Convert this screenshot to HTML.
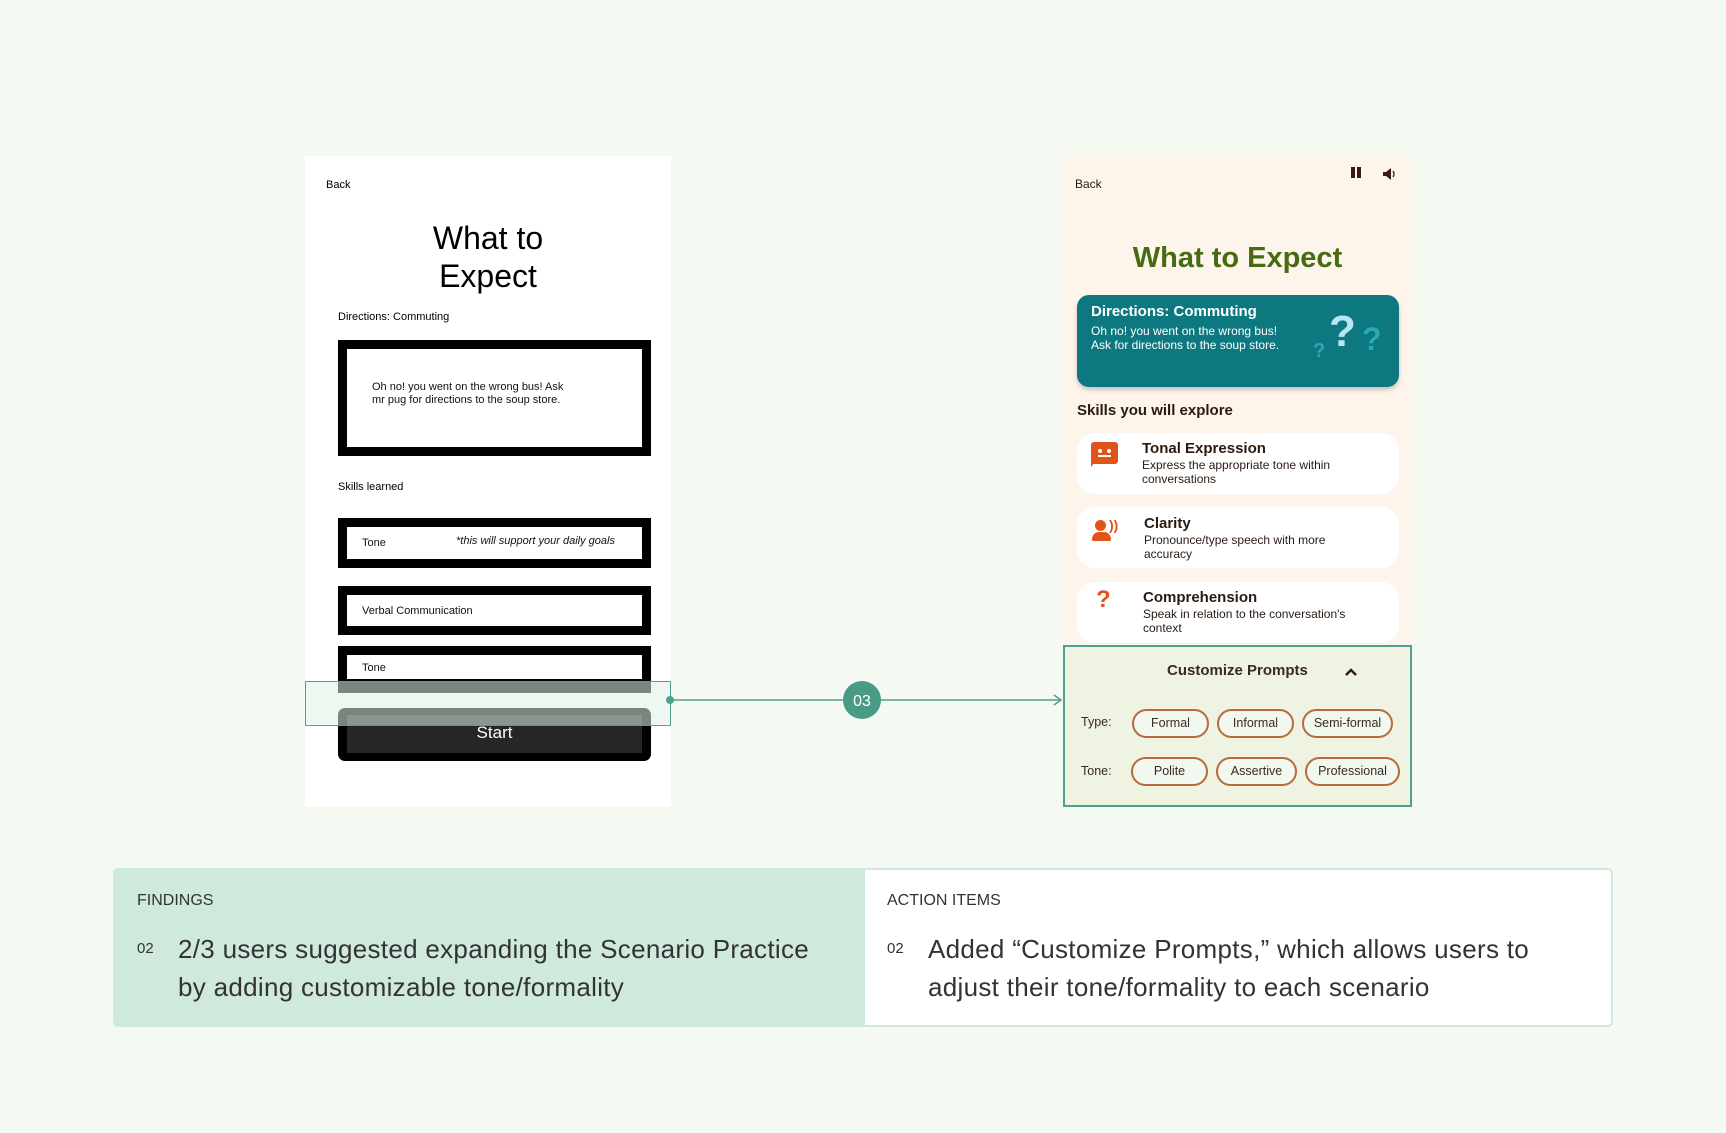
<!DOCTYPE html>
<html><head><meta charset="utf-8"><style>
*{margin:0;padding:0;box-sizing:border-box}
body{width:1726px;height:1133px;background:#f4faf1;position:relative;overflow:hidden;font-family:"Liberation Sans",sans-serif}
.a{position:absolute}
.lc{left:305px;top:156px;width:366px;height:651px;background:#fff}
.bx{position:absolute;left:338px;width:313px;border:9px solid #000;background:#fff;font-size:11px;color:#111}
.rc{left:1063px;top:156px;width:349px;height:651px;background:#fdf4ec}
.sk{position:absolute;left:1077px;width:322px;height:61px;background:#fff;border-radius:18px}
.sk b{position:absolute;font-size:15px;color:#2a1a12}
.sk span{position:absolute;font-size:12px;color:#2a1a12;line-height:14px}
.pill{position:absolute;height:29px;border:2px solid #b86a3c;border-radius:15px;background:#f1f8ef;font-size:12.5px;color:#3a2a22;text-align:center;line-height:25px}
</style></head><body>

<div class="a lc"></div>
<div class="a" style="left:326px;top:179px;font-size:11px">Back</div>
<div class="a" style="left:388px;top:219px;width:200px;text-align:center;font-size:32px;line-height:38px;color:#000">What to<br>Expect</div>
<div class="a" style="left:338px;top:311px;font-size:11px">Directions: Commuting</div>
<div class="bx" style="top:340px;height:116px"><div class="a" style="left:25px;top:32px;line-height:13px">Oh no! you went on the wrong bus! Ask<br>mr pug for directions to the soup store.</div></div>
<div class="a" style="left:338px;top:481px;font-size:11px">Skills learned</div>
<div class="bx" style="top:518px;height:50px"><div class="a" style="left:15px;top:10px">Tone</div><div class="a" style="left:109px;top:8px;font-style:italic">*this will support your daily goals</div></div>
<div class="bx" style="top:586px;height:49px"><div class="a" style="left:15px;top:10px">Verbal Communication</div></div>
<div class="bx" style="top:646px;height:47px;border-bottom-width:14px"><div class="a" style="left:15px;top:7px">Tone</div></div>
<div class="a" style="left:338px;top:708px;width:313px;height:53px;background:#000;border-radius:7px"><div class="a" style="left:9px;top:7px;width:295px;height:38px;background:#262626;color:#fff;font-size:17px;text-align:center;line-height:36px">Start</div></div>
<div class="a" style="left:305px;top:681px;width:366px;height:45px;border:1.5px solid #4fa08f;background:rgba(225,243,228,.55)"></div>

<svg class="a" style="left:0;top:0" width="1726" height="1133">
<line x1="670" y1="700" x2="1060" y2="700" stroke="#4fa08f" stroke-width="1.5"/>
<circle cx="670" cy="700" r="4" fill="#4fa08f"/>
<path d="M1054 695 L1061 700 L1054 705" fill="none" stroke="#4fa08f" stroke-width="1.5"/>
<circle cx="862" cy="700" r="19" fill="#4a9a88"/>
<text x="862" y="706" text-anchor="middle" font-family="Liberation Sans" font-size="16" fill="#fff">03</text>
</svg>

<div class="a rc"></div>
<div class="a" style="left:1075px;top:177px;font-size:12px;color:#2a1a12">Back</div>
<div class="a" style="left:1351px;top:167px;width:4px;height:11px;background:#3a1a12"></div>
<div class="a" style="left:1357px;top:167px;width:4px;height:11px;background:#3a1a12"></div>
<svg class="a" style="left:1382px;top:167px" width="14" height="14"><path d="M1 5h3l5-4v12l-5-4H1z" fill="#3a1a12"/><path d="M11 4q2 3 0 6" stroke="#3a1a12" fill="none" stroke-width="1.3"/></svg>
<div class="a" style="left:1063px;top:242px;width:349px;text-align:center;font-size:29px;font-weight:bold;color:#476b10">What to Expect</div>
<div class="a" style="left:1077px;top:295px;width:322px;height:92px;background:#0e7880;border-radius:12px;box-shadow:0 3px 4px rgba(0,0,0,.2);color:#fff">
<div class="a" style="left:14px;top:8px;font-size:15px;font-weight:bold">Directions: Commuting</div>
<div class="a" style="left:14px;top:29px;font-size:12px;line-height:14px">Oh no! you went on the wrong bus!<br>Ask for directions to the soup store.</div>
<div class="a" style="left:252px;top:12px;font-size:44px;font-weight:bold;color:#b8e6f2">?</div>
<div class="a" style="left:285px;top:26px;font-size:32px;font-weight:bold;color:#2aa9b4">?</div>
<div class="a" style="left:236px;top:45px;font-size:20px;font-weight:bold;color:#2aa9b4">?</div>
</div>
<div class="a" style="left:1077px;top:402px;font-size:15px;font-weight:bold;color:#2a1a12">Skills you will explore</div>
<div class="sk" style="top:433px"><div class="a" style="left:14px;top:9px;width:27px;height:22px;background:#e0541a;border-radius:3px"></div><div class="a" style="left:14px;top:28px;width:0;height:0;border-left:5px solid #e0541a;border-bottom:6px solid transparent"></div><div class="a" style="left:21px;top:16px;width:4px;height:4px;background:#fff;border-radius:2px"></div><div class="a" style="left:30px;top:16px;width:4px;height:4px;background:#fff;border-radius:2px"></div><div class="a" style="left:21px;top:22px;width:13px;height:2px;background:#fff"></div><b style="left:65px;top:7px">Tonal Expression</b><span style="left:65px;top:25px">Express the appropriate tone within<br>conversations</span></div>
<div class="sk" style="top:507px"><div class="a" style="left:18px;top:13px;width:11px;height:11px;background:#e0541a;border-radius:6px"></div><div class="a" style="left:15px;top:25px;width:19px;height:9px;background:#e0541a;border-radius:8px 8px 2px 2px"></div><div class="a" style="left:32px;top:10px;font-size:14px;color:#e0541a;font-weight:bold">))</div><b style="left:67px;top:8px">Clarity</b><span style="left:67px;top:26px">Pronounce/type speech with more<br>accuracy</span></div>
<div class="sk" style="top:582px"><div class="a" style="left:19px;top:4px;font-size:24px;font-weight:bold;color:#e0541a">?</div><b style="left:66px;top:7px">Comprehension</b><span style="left:66px;top:25px">Speak in relation to the conversation's<br>context</span></div>
<div class="a" style="left:1063px;top:645px;width:349px;height:162px;background:#eef3e2;border:2px solid #4fa08f">
<div class="a" style="left:102px;top:15px;font-size:15px;font-weight:bold;color:#3a2a22">Customize Prompts</div>
<svg class="a" style="left:280px;top:20px" width="12" height="10"><path d="M1 8L6 3L11 8" stroke="#3a1a12" stroke-width="2.5" fill="none"/></svg>
<div class="a" style="left:16px;top:68px;font-size:12.5px;color:#3a2a22">Type:</div>
<div class="a" style="left:16px;top:117px;font-size:12.5px;color:#3a2a22">Tone:</div>
<div class="pill" style="left:67px;top:62px;width:77px">Formal</div>
<div class="pill" style="left:152px;top:62px;width:77px">Informal</div>
<div class="pill" style="left:237px;top:62px;width:91px">Semi-formal</div>
<div class="pill" style="left:66px;top:110px;width:77px">Polite</div>
<div class="pill" style="left:151px;top:110px;width:81px">Assertive</div>
<div class="pill" style="left:240px;top:110px;width:95px">Professional</div>
</div>

<div class="a" style="left:113px;top:868px;width:1500px;height:159px;border:2px solid #cfe9dd;border-radius:5px;background:#fff"></div>
<div class="a" style="left:113px;top:868px;width:752px;height:159px;background:#cfe9dd;border-radius:5px 0 0 5px"></div>
<div class="a" style="left:137px;top:892px;font-size:16px;color:#333">FINDINGS</div>
<div class="a" style="left:137px;top:940px;font-size:15px;color:#333">02</div>
<div class="a" style="left:178px;top:930px;font-size:26px;line-height:38px;color:#333;letter-spacing:0.3px">2/3 users suggested expanding the Scenario Practice<br>by adding customizable tone/formality</div>
<div class="a" style="left:887px;top:892px;font-size:16px;color:#333">ACTION ITEMS</div>
<div class="a" style="left:887px;top:940px;font-size:15px;color:#333">02</div>
<div class="a" style="left:928px;top:930px;font-size:26px;line-height:38px;color:#333;letter-spacing:0.3px">Added “Customize Prompts,” which allows users to<br>adjust their tone/formality to each scenario</div>
</body></html>
